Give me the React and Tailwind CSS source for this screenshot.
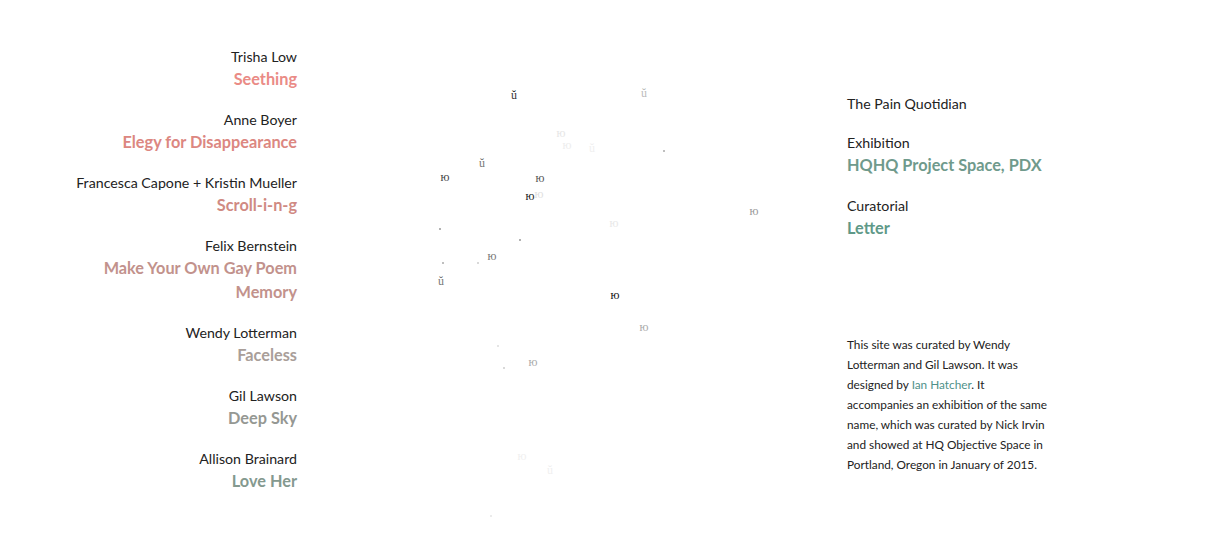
const works = [
  { artist: 'Trisha Low', title: ['Seething'], color: 'text-[#ea8b86]' },
  { artist: 'Anne Boyer', title: ['Elegy for Disappearance'], color: 'text-[#dc8781]' },
  { artist: 'Francesca Capone + Kristin Mueller', title: ['Scroll-i-n-g'], color: 'text-[#d08a83]' },
  { artist: 'Felix Bernstein', title: ['Make Your Own Gay Poem', 'Memory'], color: 'text-[#c2928c]' },
  { artist: 'Wendy Lotterman', title: ['Faceless'], color: 'text-[#a99e99]' },
  { artist: 'Gil Lawson', title: ['Deep Sky'], color: 'text-[#959893]' },
  { artist: 'Allison Brainard', title: ['Love Her'], color: 'text-[#84998f]' },
]

// scattered glyphs on the canvas, coords relative to canvas left (x=297)
const glyphs = [
  { x: 217, y: 95, c: 'ŭ', o: 'text-[#333]' },
  { x: 347, y: 93, c: 'ŭ', o: 'text-[#bbb]' },
  { x: 264, y: 133, c: 'ю', o: 'text-[#e6e6e6]' },
  { x: 270, y: 145, c: 'ю', o: 'text-[#ededed]' },
  { x: 295, y: 148, c: 'ŭ', o: 'text-[#f0f0f0]' },
  { x: 185, y: 163, c: 'ŭ', o: 'text-[#777]' },
  { x: 148, y: 177, c: 'ю', o: 'text-[#444]' },
  { x: 243, y: 178, c: 'ю', o: 'text-[#555]' },
  { x: 242, y: 194, c: 'ю', o: 'text-[#e0e0e0]' },
  { x: 233, y: 196, c: 'ю', o: 'text-[#222]' },
  { x: 317, y: 223, c: 'ю', o: 'text-[#e8e8e8]' },
  { x: 457, y: 211, c: 'ю', o: 'text-[#999]' },
  { x: 195, y: 256, c: 'ю', o: 'text-[#777]' },
  { x: 144, y: 281, c: 'ŭ', o: 'text-[#777]' },
  { x: 318, y: 295, c: 'ю', o: 'text-[#111]' },
  { x: 347, y: 327, c: 'ю', o: 'text-[#aaa]' },
  { x: 236, y: 362, c: 'ю', o: 'text-[#aaa]' },
  { x: 225, y: 456, c: 'ю', o: 'text-[#f0f0f0]' },
  { x: 253, y: 470, c: 'ŭ', o: 'text-[#f0f0f0]' },
]

const dots = [
  { x: 366, y: 150, o: 'bg-[#aaa]' },
  { x: 142, y: 228, o: 'bg-[#999]' },
  { x: 222, y: 239, o: 'bg-[#999]' },
  { x: 145, y: 262, o: 'bg-[#aaa]' },
  { x: 180, y: 262, o: 'bg-[#ccc]' },
  { x: 200, y: 345, o: 'bg-[#ddd]' },
  { x: 206, y: 367, o: 'bg-[#ccc]' },
  { x: 193, y: 515, o: 'bg-[#e5e5e5]' },
]

export default function App() {
  return (
    <div className="flex h-[536px] w-[1230px] bg-white font-['Lato',sans-serif] text-[#222]">
      <div className="flex w-[297px] shrink-0 flex-col gap-[18px] pt-[46px] text-right">
        {works.map((w) => (
          <div key={w.artist}>
            <div className="text-[14.2px] leading-[21px]">{w.artist}</div>
            {w.title.map((t) => (
              <div key={t} className={`text-[16.3px] font-bold leading-[24px] ${w.color}`}>{t}</div>
            ))}
          </div>
        ))}
      </div>

      <div className="relative w-[550px] shrink-0 font-['Liberation_Serif',serif]">
        {glyphs.map((g, i) => (
          <span
            key={i}
            className={`absolute -translate-x-1/2 -translate-y-1/2 text-[12px] leading-none ${g.o}`}
            style={{ left: g.x, top: g.y }}
          >
            {g.c}
          </span>
        ))}
        {dots.map((d, i) => (
          <span
            key={i}
            className={`absolute h-[2px] w-[2px] rounded-full ${d.o}`}
            style={{ left: d.x, top: d.y }}
          />
        ))}
      </div>

      <div className="flex w-[205px] shrink-0 flex-col pt-[93px]">
        <div className="text-[14.2px] leading-[21px]">The Pain Quotidian</div>
        <div className="mt-[18px] text-[14.2px] leading-[21px]">Exhibition</div>
        <div className="text-[16.3px] font-bold leading-[24px] text-[#6f9a8c]">HQHQ Project Space, PDX</div>
        <div className="mt-[18px] text-[14.2px] leading-[21px]">Curatorial</div>
        <div className="text-[16.3px] font-bold leading-[24px] text-[#5f9988]">Letter</div>
        <p className="mt-[95px] w-[200px] text-[11.8px] leading-[20px]">
          This site was curated by Wendy Lotterman and Gil Lawson. It was designed by{' '}
          <a className="text-[#4f9189]">Ian Hatcher</a>. It accompanies an exhibition of the same name, which was
          curated by Nick Irvin and showed at HQ Objective Space in Portland, Oregon in January of 2015.
        </p>
      </div>
    </div>
  )
}
